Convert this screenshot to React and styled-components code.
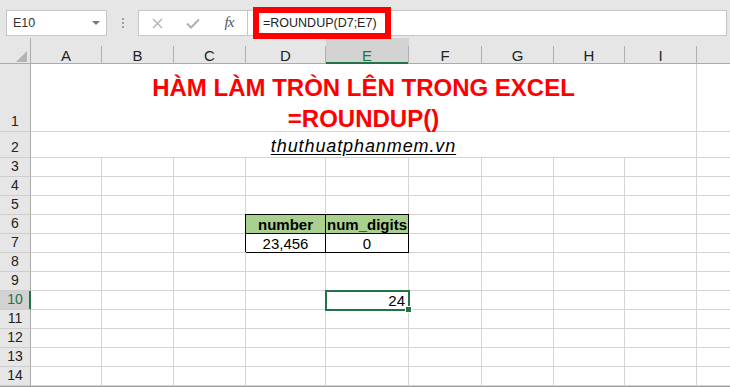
import React from "react";
import styled, { createGlobalStyle, css } from "styled-components";

const COLUMNS = ["A", "B", "C", "D", "E", "F", "G", "H", "I", "J"];
// J is only partly on screen, its letter falls outside the window
const LABELLED = ["A", "B", "C", "D", "E", "F", "G", "H", "I"];
const ROWS = Array.from({ length: 12 }, (_, i) => i + 3);
const ACTIVE_COL = "E";
const ACTIVE_ROW = 10;

const DATA = {
  D6: { text: "number", head: true },
  E6: { text: "num_digits", head: true },
  D7: { text: "23,456", boxed: true },
  E7: { text: "0", boxed: true },
  E10: { text: "24", align: "right", selected: true },
};

const GlobalStyle = createGlobalStyle`
  html, body {
    margin: 0;
    padding: 0;
    background: #fff;
  }
  body {
    font-family: "Liberation Sans", Arial, sans-serif;
    overflow: hidden;
  }
`;

const Window = styled.div`
  position: relative;
  width: 730px;
  height: 387px;
  display: flex;
  flex-direction: column;
  background: #fff;
  overflow: hidden;
`;

const Toolbar = styled.div`
  height: 38px;
  box-sizing: border-box;
  padding: 10px 0 0 6px;
  display: flex;
  align-items: flex-start;
  background: #e6e6e6;
`;

const NameBox = styled.div`
  width: 101px;
  height: 26px;
  box-sizing: border-box;
  border: 1px solid #c6c6c6;
  background: #fff;
  display: flex;
  align-items: center;
  justify-content: space-between;
  padding: 0 6px;
  font-size: 12.5px;
  color: #333;
`;

const Grip = styled.div`
  width: 31px;
  height: 26px;
  display: flex;
  flex-direction: column;
  align-items: center;
  justify-content: center;
  gap: 2px;
  span {
    width: 2px;
    height: 2px;
    background: #a0a0a0;
  }
`;

const ButtonGroup = styled.div`
  width: 110px;
  height: 26px;
  box-sizing: border-box;
  border: 1px solid #c6c6c6;
  background: #fff;
  display: grid;
  grid-template-columns: 36px 36px 36px;
  align-items: center;
  justify-items: center;
`;

const Fx = styled.span`
  font-family: "Liberation Serif", "Times New Roman", serif;
  font-style: italic;
  font-size: 15px;
  color: #555;
  letter-spacing: -1px;
  margin-top: -2px;
`;

const FormulaBar = styled.div`
  flex: 1;
  margin-right: 3px;
  height: 26px;
  box-sizing: border-box;
  border: 1px solid #c6c6c6;
  border-left: none;
  background: #fff;
  display: flex;
  align-items: center;
  padding-left: 15px;
  font-size: 12.5px;
  color: #222;
`;

const Highlight = styled.div`
  position: absolute;
  left: 253px;
  top: 7px;
  width: 138px;
  height: 32px;
  box-sizing: border-box;
  border: 6px solid #ff0000;
`;

const Sheet = styled.div`
  display: grid;
  grid-template-columns: 31px 71px 72px 72px 80px 83px 73px 72px 71px 72px 72px;
  grid-template-rows: 26px 68px 26px repeat(12, 19px);
  border-bottom: 1px solid #9e9e9e;
`;

const Corner = styled.div`
  background: #e6e6e6;
  border-right: 1px solid #ababab;
  box-shadow: inset 0 -1px 0 #ababab;
  display: flex;
  align-items: flex-end;
  justify-content: flex-end;
  padding: 0 3px 2px 0;
`;

const ColHead = styled.div`
  background: ${(p) => (p.$active ? "#d2d2d2" : "#e6e6e6")};
  color: ${(p) => (p.$active ? "#217346" : "#222")};
  box-shadow: inset 0 ${(p) => (p.$active ? "-2px" : "-1px")} 0
    ${(p) => (p.$active ? "#217346" : "#ababab")};
  border-right: 1px solid;
  border-image: linear-gradient(to bottom, transparent 8px, #b0b0b0 8px) 1;
  display: flex;
  align-items: flex-end;
  justify-content: center;
  font-size: 15px;
  line-height: 16px;
`;

const RowHead = styled.div`
  background: ${(p) => (p.$active ? "#d2d2d2" : "#e6e6e6")};
  color: ${(p) => (p.$active ? "#217346" : "#222")};
  border-right: 1px solid ${(p) => (p.$active ? "#217346" : "#ababab")};
  border-bottom: 1px solid #cdcdcd;
  ${(p) =>
    p.$active &&
    css`
      box-shadow: inset -1px 0 0 #217346;
    `}
  display: flex;
  align-items: flex-end;
  justify-content: center;
  padding-bottom: 2px;
  box-sizing: border-box;
  font-size: 14px;
  line-height: 16px;
`;

const Cell = styled.div`
  position: ${(p) => (p.$selected ? "relative" : "static")};
  z-index: ${(p) => (p.$selected ? 1 : "auto")};
  grid-column: span ${(p) => p.$span || 1};
  border-right: 1px solid #d4d4d4;
  border-bottom: 1px solid #d4d4d4;
  background: ${(p) => p.$fill || "#fff"};
  display: flex;
  align-items: flex-end;
  justify-content: ${(p) =>
    p.$align === "right" ? "flex-end" : p.$align === "left" ? "flex-start" : "center"};
  padding: 0 ${(p) => (p.$align === "right" ? "3px" : "0")};
  font-size: 15px;
  line-height: 16px;
  font-weight: ${(p) => (p.$bold ? 700 : 400)};
  color: #000;
  white-space: nowrap;
  ${(p) =>
    p.$boxed &&
    css`
      border-right-color: #000;
      border-bottom-color: #000;
      box-shadow: -1px -1px 0 #000, 0 -1px 0 #000;
    `}
  ${(p) =>
    p.$selected &&
    css`
      border-right-color: #217346;
      border-bottom-color: #217346;
      box-shadow: 0 0 0 1px #217346, inset 1px 1px 0 #217346;
    `}
`;

const FillHandle = styled.span`
  position: absolute;
  right: -4px;
  bottom: -4px;
  width: 7px;
  height: 7px;
  box-sizing: border-box;
  background: #217346;
  border: 1px solid #fff;
`;

const Title = styled(Cell)`
  align-items: flex-start;
  padding-top: 8px;
  text-align: center;
  font-size: 24px;
  line-height: 31px;
  font-weight: 700;
  color: #ff0000;
  overflow: visible;
`;

const Site = styled(Cell)`
  padding-bottom: 1px;
  font-size: 18px;
  line-height: 20px;
  font-style: italic;
  letter-spacing: 0.9px;
  text-decoration: underline;
  text-underline-offset: 2px;
`;

const CrossIcon = () => (
  <svg width="11" height="11" viewBox="0 0 11 11">
    <path d="M1 1 L10 10 M10 1 L1 10" stroke="#b0b0b0" strokeWidth="1.3" fill="none" />
  </svg>
);

const CheckIcon = () => (
  <svg width="14" height="11" viewBox="0 0 14 11">
    <path d="M1 5.5 L5 9.5 L13 1.5" stroke="#b0b0b0" strokeWidth="2" fill="none" />
  </svg>
);

const DropArrow = () => (
  <svg width="8" height="4" viewBox="0 0 8 4">
    <polygon points="0,0 8,0 4,4" fill="#777" />
  </svg>
);

const SelectAll = () => (
  <svg width="11" height="11" viewBox="0 0 11 11">
    <polygon points="11,0 11,11 0,11" fill="#b4b4b4" />
  </svg>
);

const App = () => {
  const renderCell = (col, row) => {
    const key = `${col}${row}`;
    const d = DATA[key];
    if (!d) return <Cell key={key} />;
    return (
      <Cell
        key={key}
        $align={d.align}
        $bold={d.head}
        $fill={d.head ? "#a9d08e" : undefined}
        $boxed={d.head || d.boxed}
        $selected={d.selected}
      >
        {d.text}
        {d.selected && <FillHandle />}
      </Cell>
    );
  };

  return (
    <Window>
      <GlobalStyle />
      <Toolbar>
        <NameBox>
          <span>E10</span>
          <DropArrow />
        </NameBox>
        <Grip>
          <span />
          <span />
          <span />
        </Grip>
        <ButtonGroup>
          <CrossIcon />
          <CheckIcon />
          <Fx>fx</Fx>
        </ButtonGroup>
        <FormulaBar>=ROUNDUP(D7;E7)</FormulaBar>
      </Toolbar>
      <Highlight />

      <Sheet>
        <Corner>
          <SelectAll />
        </Corner>
        {COLUMNS.map((c) => (
          <ColHead key={c} $active={c === ACTIVE_COL}>
            {LABELLED.includes(c) ? c : null}
          </ColHead>
        ))}

        <RowHead>1</RowHead>
        <Title $span={9}>
          HÀM LÀM TRÒN LÊN TRONG EXCEL
          <br />
          =ROUNDUP()
        </Title>
        <Cell />

        <RowHead>2</RowHead>
        <Site $span={9}>thuthuatphanmem.vn</Site>
        <Cell />

        {ROWS.map((r) => (
          <React.Fragment key={r}>
            <RowHead $active={r === ACTIVE_ROW}>{r}</RowHead>
            {COLUMNS.map((c) => renderCell(c, r))}
          </React.Fragment>
        ))}
      </Sheet>
    </Window>
  );
};

export default App;
